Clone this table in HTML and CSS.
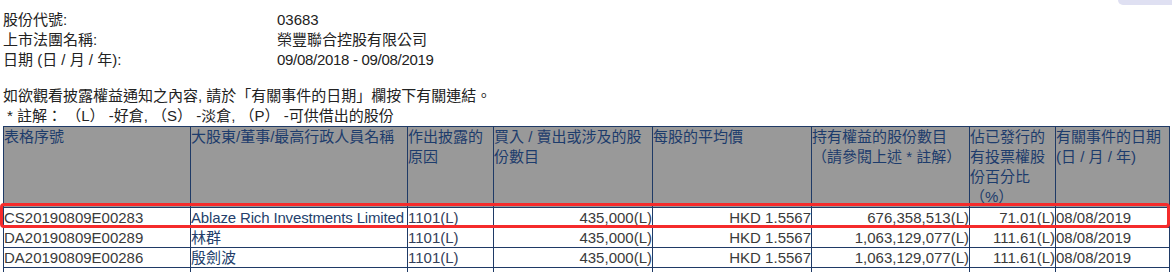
FILE: index.html
```html
<!DOCTYPE html>
<html lang="zh-Hant">
<head>
<meta charset="utf-8">
<title>權益披露</title>
<link rel="stylesheet" href="styles.css">
</head>
<body>
<div class="corner-tab"></div>
<div class="info">
  <div class="info-label">股份代號:</div><div class="info-value">03683</div>
  <div class="info-label">上市法團名稱:</div><div class="info-value">榮豐聯合控股有限公司</div>
  <div class="info-label">日期 (日 / 月 / 年):</div><div class="info-value date-range">09/08/2018 - 09/08/2019</div>
</div>
<div class="notes">
  <p class="note">如欲觀看披露權益通知之內容, 請於「有關事件的日期」欄按下有關連結。</p>
  <p class="note legend">* 註解： （L） -好倉, （S） -淡倉, （P） -可供借出的股份</p>
</div>
<div class="table-wrap">
  <table class="disclosures">
    <colgroup>
      <col class="c1"><col class="c2"><col class="c3"><col class="c4"><col class="c5"><col class="c6"><col class="c7"><col class="c8">
    </colgroup>
    <thead>
      <tr>
        <th>表格序號</th>
        <th>大股東/董事/最高行政人員名稱</th>
        <th>作出披露的原因</th>
        <th>買入 / 賣出或涉及的股份數目</th>
        <th>每股的平均價</th>
        <th>持有權益的股份數目<br>（請參閱上述 * 註解）</th>
        <th>佔已發行的有投票權股份百分比（%）</th>
        <th>有關事件的日期<br>(日 / 月 / 年)</th>
      </tr>
    </thead>
    <tbody>
      <tr>
        <td>CS20190809E00283</td>
        <td class="name latin">Ablaze Rich Investments Limited</td>
        <td class="reason">1101(L)</td>
        <td class="num">435,000(L)</td>
        <td class="num">HKD 1.5567</td>
        <td class="num">676,358,513(L)</td>
        <td class="num">71.01(L)</td>
        <td>08/08/2019</td>
      </tr>
      <tr>
        <td>DA20190809E00289</td>
        <td class="name">林群</td>
        <td class="reason">1101(L)</td>
        <td class="num">435,000(L)</td>
        <td class="num">HKD 1.5567</td>
        <td class="num">1,063,129,077(L)</td>
        <td class="num">111.61(L)</td>
        <td>08/08/2019</td>
      </tr>
      <tr>
        <td>DA20190809E00286</td>
        <td class="name">殷劍波</td>
        <td class="reason">1101(L)</td>
        <td class="num">435,000(L)</td>
        <td class="num">HKD 1.5567</td>
        <td class="num">1,063,129,077(L)</td>
        <td class="num">111.61(L)</td>
        <td>08/08/2019</td>
      </tr>
      <tr>
        <td>&nbsp;</td><td>&nbsp;</td><td>&nbsp;</td><td>&nbsp;</td><td>&nbsp;</td><td>&nbsp;</td><td>&nbsp;</td><td>&nbsp;</td>
      </tr>
    </tbody>
  </table>
  <div class="highlight"></div>
</div>
</body>
</html>
```
FILE: styles.css
```css
html, body {
  margin: 0;
  padding: 0;
  background: #ffffff;
}

body {
  position: relative;
  font-family: "Liberation Sans", Arial, "Noto Sans CJK TC", sans-serif;
  font-size: 15px;
  line-height: 20px;
  color: #222222;
  overflow: hidden;
}

.corner-tab {
  position: absolute;
  top: 0;
  right: 0;
  width: 54px;
  height: 5px;
  background: #dfe0f2;
  border-bottom-left-radius: 6px;
}

.info {
  display: grid;
  grid-template-columns: 274px auto;
  padding: 10px 0 0 3px;
}

.date-range {
  letter-spacing: -0.3px;
}

.notes {
  margin-top: 16px;
  padding-left: 3px;
}

.note {
  margin: 0;
}

.legend {
  padding-left: 4px;
}

.table-wrap {
  position: relative;
  margin-left: 3px;
}

.disclosures {
  border-collapse: collapse;
  table-layout: fixed;
  width: 1167px;
}

.c1 { width: 187px; }
.c2 { width: 217px; }
.c3 { width: 86px; }
.c4 { width: 159px; }
.c5 { width: 159px; }
.c6 { width: 158px; }
.c7 { width: 86px; }
.c8 { width: 114px; }

.disclosures th,
.disclosures td {
  border: 1px solid #1f3a66;
  padding: 0;
}

.disclosures th {
  background: #999999;
  color: #1d3c6c;
  font-weight: normal;
  text-align: left;
  vertical-align: top;
  height: 79px;
  line-height: 20px;
}

.disclosures td {
  color: #3a3a3a;
  line-height: 19px;
  height: 19px;
  white-space: nowrap;
  overflow: hidden;
}

.disclosures td.name {
  color: #243f6c;
}

.disclosures td.latin {
  letter-spacing: -0.15px;
}

.disclosures td.reason {
  color: #33405a;
}

.disclosures td.num {
  text-align: right;
}

.highlight {
  position: absolute;
  left: -3px;
  top: 77px;
  width: 1164px;
  height: 19px;
  border: 3px solid #f52b2b;
  border-radius: 4px;
}
```
